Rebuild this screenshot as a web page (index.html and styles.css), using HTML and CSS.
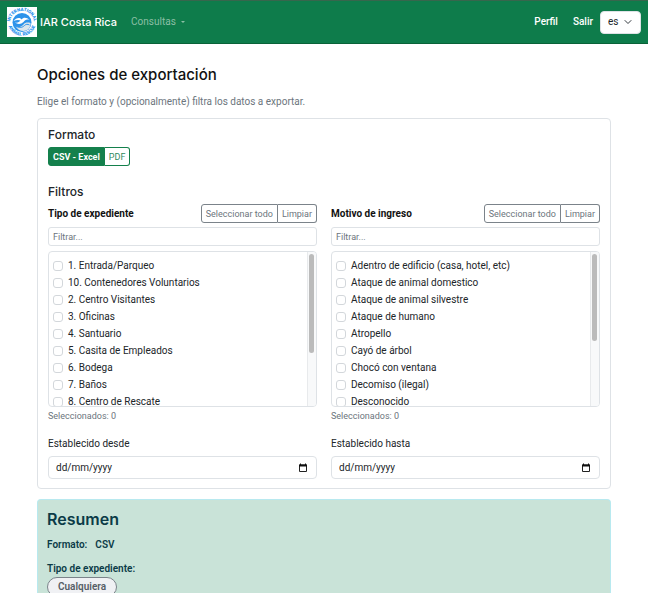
FILE: index.html
```html
<!DOCTYPE html>
<html lang="es">
<head>
<meta charset="utf-8">
<meta name="viewport" content="width=device-width, initial-scale=1">
<title>Opciones de exportación</title>
<link rel="stylesheet" href="styles.css">
</head>
<body>
<header class="navbar">
  <a class="brand" href="#">
    <svg class="logo" viewBox="0 0 60 60" role="img" aria-label="International Animal Rescue">
      <defs>
        <path id="ring-top" d="M10 45A24 24 0 1 1 50 45"/>
        <path id="ring-low" d="M4 40A28 28 0 0 0 56 40"/>
      </defs>
      <rect width="60" height="60" fill="#fff"/>
      <g fill="#2a92ee" font-family="Roboto, sans-serif" font-weight="900" font-size="9">
        <text><textPath href="#ring-top" startOffset="50%" text-anchor="middle">INTERNATIONAL</textPath></text>
        <text><textPath href="#ring-low" startOffset="50%" text-anchor="middle">ANIMAL RESCUE</textPath></text>
      </g>
      <circle cx="30" cy="31" r="19" fill="#2d93ea"/>
      <path d="M13 28c5-6 12-8 16-3 4-5 11-4 16 1-6-2-9 0-12 4-5 5-12 5-17 1 5 1 9-1 11-4-4-2-9-1-14 1z" fill="#fff"/>
      <path d="M17 38c5 4 12 2 16-3 3-4 8-5 14-3 1 9-6 16-14 16-7 0-13-4-16-10z" fill="#dde6ec"/>
      <path d="M18 38c6 5 13 3 17-1 3-3 6-3 10-1" fill="none" stroke="#2d93ea" stroke-width="2"/>
    </svg>
    <span>IAR Costa Rica</span>
  </a>
  <button class="nav-menu" type="button">Consultas <span class="caret"></span></button>
  <nav class="nav-right">
    <a href="#">Perfil</a>
    <a href="#">Salir</a>
    <select class="lang" aria-label="Idioma"><option>es</option><option>en</option></select>
  </nav>
</header>

<main class="page">
  <h1>Opciones de exportación</h1>
  <p class="lead">Elige el formato y (opcionalmente) filtra los datos a exportar.</p>

  <form class="card">
    <h2>Formato</h2>
    <div class="btn-group formats">
      <button class="btn active" type="button">CSV - Excel</button><button class="btn" type="button">PDF</button>
    </div>
    <h2>Filtros</h2>
    <div class="columns">
      <section class="filter">
        <div class="filter-head">
          <h3>Tipo de expediente</h3>
          <div class="btn-group">
            <button class="btn muted" type="button">Seleccionar todo</button><button class="btn muted" type="button">Limpiar</button>
          </div>
        </div>
        <input class="search" type="text" placeholder="Filtrar..." aria-label="Filtrar tipo de expediente">
        <div class="options">
          <div class="list">
            <label><input type="checkbox">1. Entrada/Parqueo</label>
            <label><input type="checkbox">10. Contenedores Voluntarios</label>
            <label><input type="checkbox">2. Centro Visitantes</label>
            <label><input type="checkbox">3. Oficinas</label>
            <label><input type="checkbox">4. Santuario</label>
            <label><input type="checkbox">5. Casita de Empleados</label>
            <label><input type="checkbox">6. Bodega</label>
            <label><input type="checkbox">7. Baños</label>
            <label><input type="checkbox">8. Centro de Rescate</label>
          </div>
          <div class="track"><div class="thumb"></div></div>
        </div>
        <p class="count">Seleccionados: 0</p>
        <label class="date-label" for="desde">Establecido desde</label>
        <div class="date">
          <input id="desde" type="text" placeholder="dd/mm/yyyy">
          <button type="button" aria-label="Abrir calendario"><svg viewBox="0 0 10 10"><path d="M1.5 2h7v6.5h-7z" fill="none" stroke="#222"/><path d="M1 1.5h8v2H1zM2 .5h1v1H2zM7 .5h1v1H7z" fill="#111"/></svg></button>
        </div>
      </section>
      <section class="filter">
        <div class="filter-head">
          <h3>Motivo de ingreso</h3>
          <div class="btn-group">
            <button class="btn muted" type="button">Seleccionar todo</button><button class="btn muted" type="button">Limpiar</button>
          </div>
        </div>
        <input class="search" type="text" placeholder="Filtrar..." aria-label="Filtrar motivo de ingreso">
        <div class="options long">
          <div class="list">
            <label><input type="checkbox">Adentro de edificio (casa, hotel, etc)</label>
            <label><input type="checkbox">Ataque de animal domestico</label>
            <label><input type="checkbox">Ataque de animal silvestre</label>
            <label><input type="checkbox">Ataque de humano</label>
            <label><input type="checkbox">Atropello</label>
            <label><input type="checkbox">Cayó de árbol</label>
            <label><input type="checkbox">Chocó con ventana</label>
            <label><input type="checkbox">Decomiso (ilegal)</label>
            <label><input type="checkbox">Desconocido</label>
          </div>
          <div class="track"><div class="thumb"></div></div>
        </div>
        <p class="count">Seleccionados: 0</p>
        <label class="date-label" for="hasta">Establecido hasta</label>
        <div class="date">
          <input id="hasta" type="text" placeholder="dd/mm/yyyy">
          <button type="button" aria-label="Abrir calendario"><svg viewBox="0 0 10 10"><path d="M1.5 2h7v6.5h-7z" fill="none" stroke="#222"/><path d="M1 1.5h8v2H1zM2 .5h1v1H2zM7 .5h1v1H7z" fill="#111"/></svg></button>
        </div>
      </section>
    </div>
  </form>

  <section class="summary">
    <h2>Resumen</h2>
    <p class="row"><span>Formato:</span><span>CSV</span></p>
    <p>Tipo de expediente:</p>
    <span class="pill">Cualquiera</span>
  </section>
</main>
</body>
</html>
```

FILE: styles.css
```css
* { box-sizing: border-box; }

body {
  margin: 0;
  background: #fff;
  color: #212529;
  font: 10px/16px Roboto, "Liberation Sans", sans-serif;
}

h1, h2, h3, p { margin: 0; }
h1, h2, .brand { font-family: Inter, "Liberation Sans", sans-serif; }
button, input, select { font: inherit; color: inherit; margin: 0; }
a { color: inherit; text-decoration: none; }

.navbar {
  display: flex;
  align-items: center;
  height: 44px;
  padding: 0 7px;
  background: #0e7c4b;
  border-top: 1px solid #37664d;
  border-bottom: 1px solid #0a6238;
  color: #fff;
}

.brand {
  display: flex;
  align-items: center;
  gap: 3px;
  font-size: 11px;
  font-weight: 500;
}
.logo { width: 30px; height: 30px; }

.nav-menu {
  display: flex;
  align-items: center;
  gap: 5px;
  margin-left: 14px;
  padding: 0;
  border: 0;
  background: none;
  color: #8bbfa5;
}
.caret {
  border: 2px solid transparent;
  border-top-color: currentColor;
  border-bottom: 0;
}

.nav-right {
  display: flex;
  align-items: center;
  gap: 15px;
  margin-left: auto;
  font-weight: 500;
}
.lang {
  appearance: none;
  width: 41px;
  height: 23px;
  margin-left: -8px;
  padding: 0 7px;
  border: 1px solid #dee2e6;
  border-radius: 4px;
  background: #fff url("data:image/svg+xml,%3Csvg xmlns='http://www.w3.org/2000/svg' viewBox='0 0 16 16'%3E%3Cpath fill='none' stroke='%23343a40' stroke-width='2' stroke-linecap='round' stroke-linejoin='round' d='m2 5 6 6 6-6'/%3E%3C/svg%3E") no-repeat right 8px center / 8px;
  color: #212529;
  font-weight: 400;
}

.page { padding: 20px 37px 0; }

h1 {
  font-size: 15px;
  line-height: 22px;
  font-weight: 500;
  color: #111;
}
.lead { margin: 8px 0 8px; color: #6c757d; }

.card {
  padding: 8px 10px 9px;
  border: 1px solid #dee2e6;
  border-radius: 4px;
}
.card h2 {
  font-size: 12px;
  line-height: 16px;
  font-weight: 500;
}

.btn-group { display: flex; }
.formats { margin: 4px 0 18px; }
.btn {
  height: 19px;
  padding: 0 4px;
  border: 1px solid #14804c;
  background: #fff;
  color: #2f8a60;
  font-size: 9px;
  line-height: 16px;
  white-space: nowrap;
}
.btn:first-child { border-radius: 3px 0 0 3px; }
.btn:last-child { border-radius: 0 3px 3px 0; border-left: 0; }
.btn.active { background: #14804c; color: #fff; font-weight: 700; }
.btn.muted { border-color: #7b838a; color: #6c757d; }

.columns {
  display: grid;
  grid-template-columns: 1fr 1fr;
  gap: 14px;
  margin-top: 4px;
}
.filter { display: flex; flex-direction: column; min-width: 0; }
.filter-head {
  display: flex;
  align-items: center;
  justify-content: space-between;
}
.filter-head h3 { font-size: 10px; font-weight: 700; color: #111; }

.search, .date {
  border: 1px solid #dee2e6;
  border-radius: 3px;
  background: #fff;
}
.search {
  width: 100%;
  height: 19px;
  margin: 4px 0 5px;
  padding: 0 4px;
  font-size: 9px;
}
.search::placeholder { color: #6c757d; opacity: 1; }

.options {
  display: flex;
  height: 156px;
  border: 1px solid #dee2e6;
  border-radius: 4px;
  overflow: hidden;
}
.list { flex: 1; padding: 5px 4px; }
.list label {
  display: flex;
  align-items: center;
  gap: 5px;
  height: 17px;
}
.list input {
  appearance: none;
  width: 10px;
  height: 10px;
  border: 1px solid #d3d7db;
  border-radius: 3px;
  background: #fff;
}
.list input:checked { background: #14804c; }
.track {
  width: 9px;
  padding: 2px 1px;
  border-left: 1px solid #e8eaec;
  background: #f8f9fa;
}
.thumb { width: 5px; height: 66%; border-radius: 3px; background: #bbb; }
.long .thumb { height: 58%; }

.count { margin-top: 1px; font-size: 9px; color: #6c757d; }
.date-label { margin: 12px 0 4px; }
.date {
  display: flex;
  align-items: center;
  height: 23px;
  padding: 0 8px 0 7px;
  border-radius: 4px;
}
.date input { flex: 1; min-width: 0; padding: 0; border: 0; outline: 0; }
.date input::placeholder { color: #212529; opacity: 1; }
.date button { display: flex; padding: 0; border: 0; background: none; }
.date svg { width: 10px; height: 10px; }

.summary {
  margin-top: 10px;
  padding: 9px;
  border: 1px solid #b8e9ef;
  border-bottom: 0;
  border-radius: 4px 4px 0 0;
  background: #c9e3d8;
  color: #0b3b47;
  font-weight: 600;
}
.summary h2 { font-size: 16px; line-height: 20px; font-weight: 600; }
.summary p { margin-top: 8px; }
.summary .row { display: flex; gap: 8px; }
.pill {
  display: inline-block;
  padding: 1px 10px;
  border: 1px solid #7b838a;
  border-radius: 10px;
  background: #f0f1f4;
  color: #565e66;
}
```
